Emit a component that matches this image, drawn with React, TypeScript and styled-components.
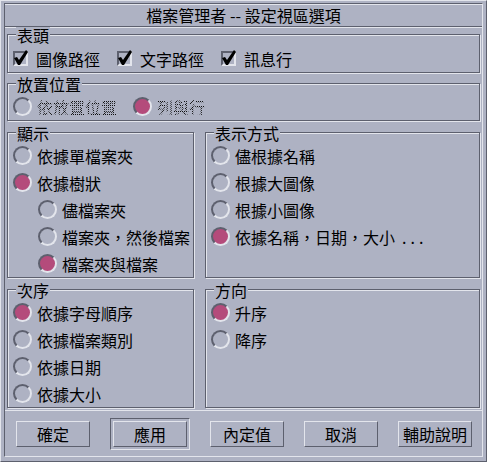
import React from "react";
import styled, { createGlobalStyle } from "styled-components";

const BG = "#aeb2c3";
const LIGHT = "#e3e5ec";
const DARK = "#5d606e";
const PINK = "#b44b7b";

const GlobalStyle = createGlobalStyle`
  body {
    margin: 0;
    background: ${BG};
    font-family: "Noto Sans CJK TC", "Noto Sans", sans-serif;
    font-size: 16px;
    color: #000;
  }
`;

const Window = styled.div`
  box-sizing: border-box;
  width: 487px;
  height: 462px;
  background: ${BG};
  border: 1px solid;
  border-color: ${LIGHT} ${DARK} ${DARK} ${LIGHT};
  padding: 2px 3px 4px 3px;
`;

const Inner = styled.div`
  box-sizing: border-box;
  height: 100%;
  display: flex;
  flex-direction: column;
  border: 1px solid;
  border-color: ${DARK} ${LIGHT} ${LIGHT} ${DARK};
`;

const TitleBar = styled.div`
  box-sizing: border-box;
  height: 23px;
  display: flex;
  align-items: center;
  justify-content: center;
  border-bottom: 1px solid ${DARK};
  box-shadow: 0 1px 0 ${LIGHT}, inset 0 1px 0 ${LIGHT};
  line-height: 16px;
  white-space: pre;
`;

const Body = styled.div`
  display: flex;
  flex-direction: column;
  padding: 7px 2px 0;
`;

const Group = styled.div<{ $h: number; $gap?: number; $w?: number }>`
  box-sizing: border-box;
  height: ${(p) => p.$h}px;
  ${(p) => (p.$w ? `width: ${p.$w}px; flex: none;` : "flex: 1;")}
  margin-top: ${(p) => p.$gap ?? 0}px;
  display: flex;
  flex-direction: column;
  padding: 0 5px;
  border: 1px solid ${DARK};
  box-shadow: inset 1px 1px 0 ${LIGHT}, 1px 1px 0 ${LIGHT};
`;

const Legend = styled.div`
  height: 9px;
  display: flex;
`;

const LegendText = styled.span`
  margin: -8px 0 0 3px;
  padding: 0 1px;
  height: 16px;
  line-height: 16px;
  background: ${BG};
  white-space: nowrap;
`;

const Columns = styled.div<{ $gap: number }>`
  display: flex;
  gap: 11px;
  margin-top: ${(p) => p.$gap}px;
`;

const Row = styled.div<{ $indent?: number; $gap?: number; $top?: number }>`
  height: 27px;
  display: flex;
  align-items: center;
  gap: ${(p) => p.$gap ?? 0}px;
  padding-left: ${(p) => p.$indent ?? 0}px;
  margin-top: ${(p) => p.$top ?? 0}px;
  flex: none;
`;

const Option = styled.div<{ $space: number }>`
  display: flex;
  align-items: center;
  gap: ${(p) => p.$space}px;
`;

const RadioMark = styled.span<{ $on?: boolean }>`
  box-sizing: border-box;
  width: 19px;
  height: 19px;
  border-radius: 50%;
  border: 2px solid;
  border-color: ${DARK} ${LIGHT} ${LIGHT} ${DARK};
  background: ${(p) => (p.$on ? PINK : "transparent")};
  flex: none;
`;

const CheckBox = styled.span`
  box-sizing: border-box;
  width: 15px;
  height: 15px;
  border: 2px solid;
  border-color: ${DARK} ${LIGHT} ${LIGHT} ${DARK};
  display: flex;
  flex: none;
  svg {
    margin: -2px;
    overflow: visible;
  }
`;

const Label = styled.span<{ $off?: boolean }>`
  line-height: 16px;
  white-space: nowrap;
  ${(p) =>
    p.$off
      ? `
    color: transparent;
    background-image: repeating-conic-gradient(#111 0 25%, transparent 0 50%);
    background-size: 2px 2px;
    -webkit-background-clip: text;
    background-clip: text;
  `
      : ""}
`;

const Dots = styled.span`
  margin-left: 7px;
  letter-spacing: 4px;
`;

const ButtonBar = styled.div`
  flex: 1;
  margin-top: 2px;
  display: flex;
  align-items: center;
  justify-content: space-between;
  padding: 0 10px 0 11px;
  border-top: 1px solid ${LIGHT};
`;

const Button = styled.button`
  box-sizing: border-box;
  width: 74px;
  height: 26px;
  padding: 0;
  background: ${BG};
  border: 1px solid;
  border-color: ${LIGHT} ${DARK} ${DARK} ${LIGHT};
  font-family: inherit;
  font-size: 16px;
  line-height: 16px;
  color: #000;
`;

const DefaultRing = styled.div`
  padding: 2px;
  border: 1px solid;
  border-color: ${DARK} ${LIGHT} ${LIGHT} ${DARK};
  display: flex;
`;

const Check = () => (
  <svg width="15" height="15" viewBox="0 0 15 15">
    <path d="M1 7 L4 6 L6 9 L13 -1 L15 1 L7 14 L5 14 Z" fill="#000" />
  </svg>
);

const Radio = ({ on, text, off }: { on?: boolean; text: React.ReactNode; off?: boolean }) => (
  <Option $space={5}>
    <RadioMark $on={on} />
    <Label $off={off}>{text}</Label>
  </Option>
);

const CheckItem = ({ text }: { text: string }) => (
  <Option $space={8}>
    <CheckBox>
      <Check />
    </CheckBox>
    <Label>{text}</Label>
  </Option>
);

const Frame = ({
  title,
  h,
  gap,
  w,
  children,
}: {
  title: string;
  h: number;
  gap?: number;
  w?: number;
  children: React.ReactNode;
}) => (
  <Group $h={h} $gap={gap} $w={w}>
    <Legend>
      <LegendText>{title}</LegendText>
    </Legend>
    {children}
  </Group>
);

export default function App() {
  return (
    <>
      <GlobalStyle />
      <Window>
        <Inner>
          <TitleBar>檔案管理者 -- 設定視區選項</TitleBar>
          <Body>
            <Frame title="表頭" h={41}>
              <Row $gap={17} $top={1}>
                <CheckItem text="圖像路徑" />
                <CheckItem text="文字路徑" />
                <CheckItem text="訊息行" />
              </Row>
            </Frame>
            <Frame title="放置位置" h={39} gap={10}>
              <Row $gap={16}>
                <Radio off text="依放置位置" />
                <Radio off on text="列與行" />
              </Row>
            </Frame>
            <Columns $gap={11}>
              <Frame title="顯示" h={146} w={187}>
                <Row>
                  <Radio text="依據單檔案夾" />
                </Row>
                <Row>
                  <Radio on text="依據樹狀" />
                </Row>
                <Row $indent={25}>
                  <Radio text="儘檔案夾" />
                </Row>
                <Row $indent={25}>
                  <Radio text="檔案夾，然後檔案" />
                </Row>
                <Row $indent={25}>
                  <Radio on text="檔案夾與檔案" />
                </Row>
              </Frame>
              <Frame title="表示方式" h={146}>
                <Row>
                  <Radio text="儘根據名稱" />
                </Row>
                <Row>
                  <Radio text="根據大圖像" />
                </Row>
                <Row>
                  <Radio text="根據小圖像" />
                </Row>
                <Row>
                  <Radio
                    on
                    text={
                      <>
                        依據名稱，日期，大小<Dots>...</Dots>
                      </>
                    }
                  />
                </Row>
              </Frame>
            </Columns>
            <Columns $gap={11}>
              <Frame title="次序" h={119} w={187}>
                <Row>
                  <Radio on text="依據字母順序" />
                </Row>
                <Row>
                  <Radio text="依據檔案類別" />
                </Row>
                <Row>
                  <Radio text="依據日期" />
                </Row>
                <Row>
                  <Radio text="依據大小" />
                </Row>
              </Frame>
              <Frame title="方向" h={119}>
                <Row>
                  <Radio on text="升序" />
                </Row>
                <Row>
                  <Radio text="降序" />
                </Row>
              </Frame>
            </Columns>
          </Body>
          <ButtonBar>
            <Button>確定</Button>
            <DefaultRing>
              <Button>應用</Button>
            </DefaultRing>
            <Button>內定值</Button>
            <Button>取消</Button>
            <Button>輔助說明</Button>
          </ButtonBar>
        </Inner>
      </Window>
    </>
  );
}
